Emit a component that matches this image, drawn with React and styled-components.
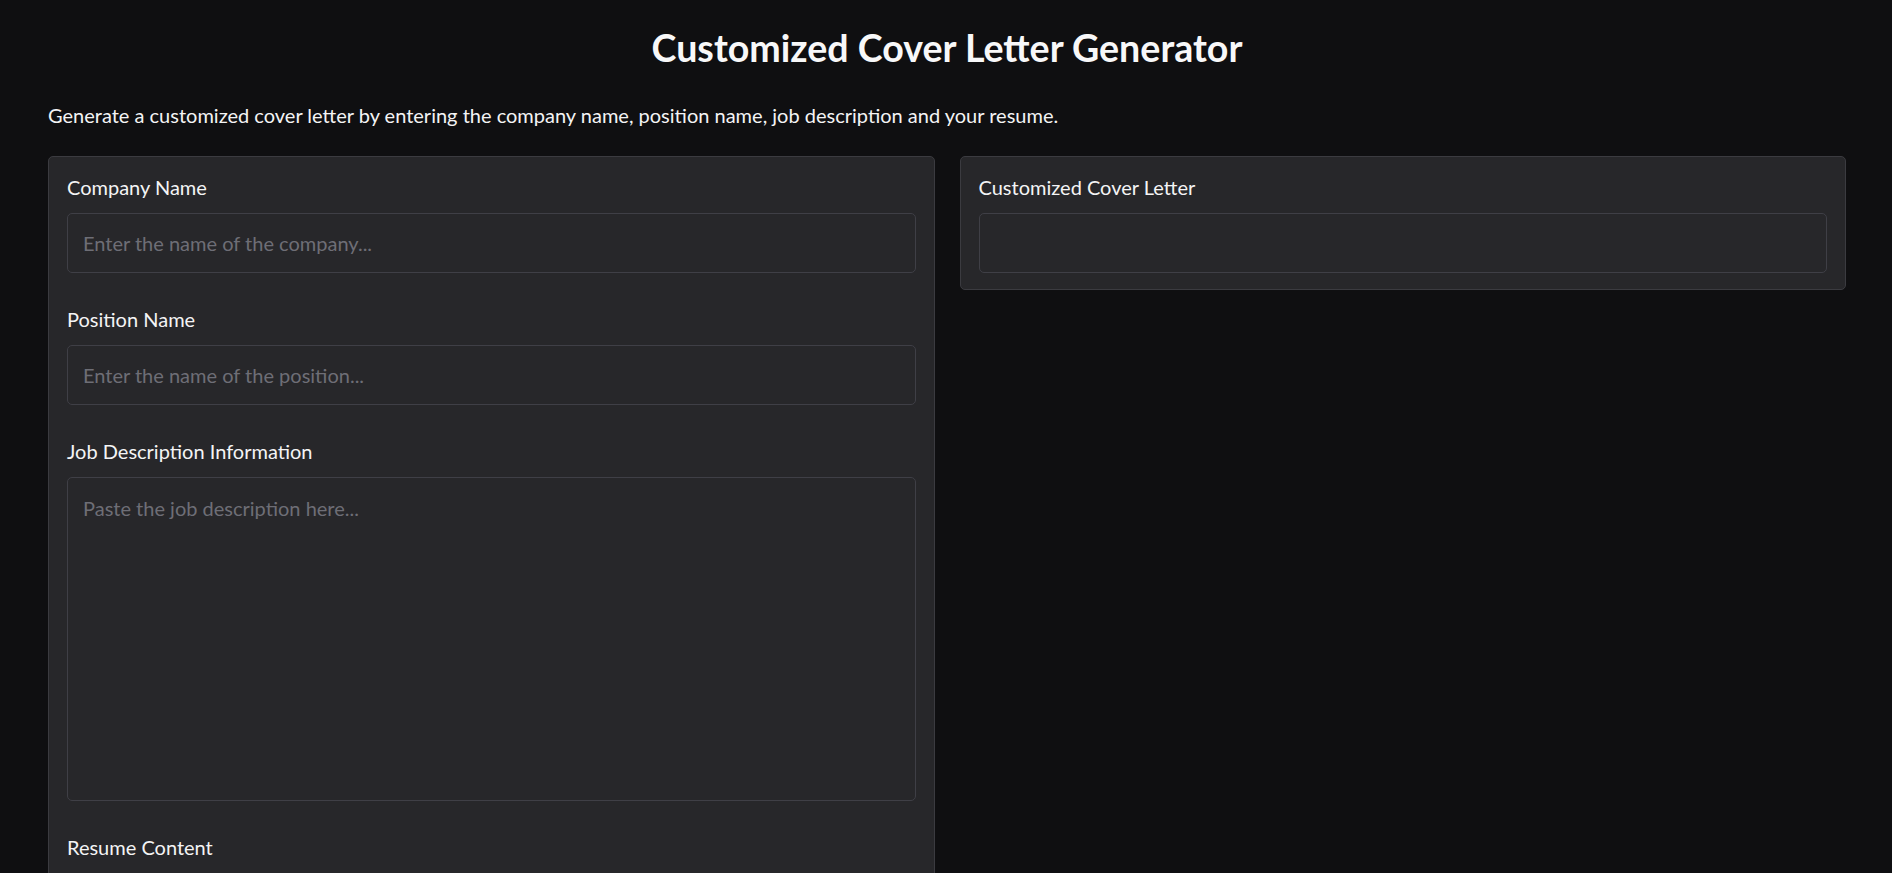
import React from 'react'
import styled, { createGlobalStyle } from 'styled-components';

const GlobalStyle = createGlobalStyle`
  html, body {
    margin:0;
    padding:0;
    background-color:#0f0f11;
    font-family:Lato, "Noto Sans", sans-serif;
    color:#f4f4f5;
    overflow:hidden;
  }
`
const Page = styled.div`
  min-height:100vh;
  padding:25px 46px 40px 48px;
  box-sizing:border-box;
`
const Title = styled.h1`
  margin:0;
  text-align:center;
  font-size:37.6px;
  line-height:46px;
  font-weight:700;
  color:#f8f8f9;
`
const Description = styled.p`
  margin:29px 0 26px;
  font-size:20px;
  line-height:30px;
`
const Columns = styled.div`
  display:grid;
  grid-template-columns:1fr 1fr;
  gap:25px;
  align-items:start;
`
const Panel = styled.div`
  background-color:#27272a;
  border:1px solid #3b3b40;
  border-radius:5px;
  padding:15px 18px 16px;
  display:flex;
  flex-direction:column;
  gap:31px;
`
const Field = styled.label`
  display:flex;
  flex-direction:column;
  gap:11px;
`
const Label = styled.span`
  font-size:20px;
  line-height:30px;
  color:#f4f4f5;
`
const Input = styled.input`
  height:60px;
  box-sizing:border-box;
  background-color:#27272a;
  border:1px solid #3f3f46;
  border-radius:5px;
  padding:0 15px;
  font-family:inherit;
  font-size:20px;
  color:#f4f4f5;
  outline:none;
  &::placeholder { color:#6e6e76; }
`
const TextArea = styled.textarea`
  height:${(props) => props.height}px;
  box-sizing:border-box;
  resize:none;
  background-color:#27272a;
  border:1px solid #3f3f46;
  border-radius:5px;
  padding:15px;
  font-family:inherit;
  font-size:20px;
  line-height:30px;
  color:#f4f4f5;
  outline:none;
  &::placeholder { color:#6e6e76; }
`
const Output = styled.div`
  height:60px;
  box-sizing:border-box;
  border:1px solid #3f3f46;
  border-radius:5px;
`

const App = () => {
  return (
    <Page>
      <GlobalStyle />
      <Title>Customized Cover Letter Generator</Title>
      <Description>Generate a customized cover letter by entering the company name, position name, job description and your resume.</Description>
      <Columns>
        <Panel>
          <Field>
            <Label>Company Name</Label>
            <Input placeholder='Enter the name of the company...' />
          </Field>
          <Field>
            <Label>Position Name</Label>
            <Input placeholder='Enter the name of the position...' />
          </Field>
          <Field>
            <Label>Job Description Information</Label>
            <TextArea height={324} placeholder='Paste the job description here...' />
          </Field>
          <Field>
            <Label>Resume Content</Label>
            <TextArea height={324} placeholder='Paste your resume here...' />
          </Field>
        </Panel>
        <Panel>
          <Field as='div'>
            <Label>Customized Cover Letter</Label>
            <Output />
          </Field>
        </Panel>
      </Columns>
    </Page>
  )
}

export default App
